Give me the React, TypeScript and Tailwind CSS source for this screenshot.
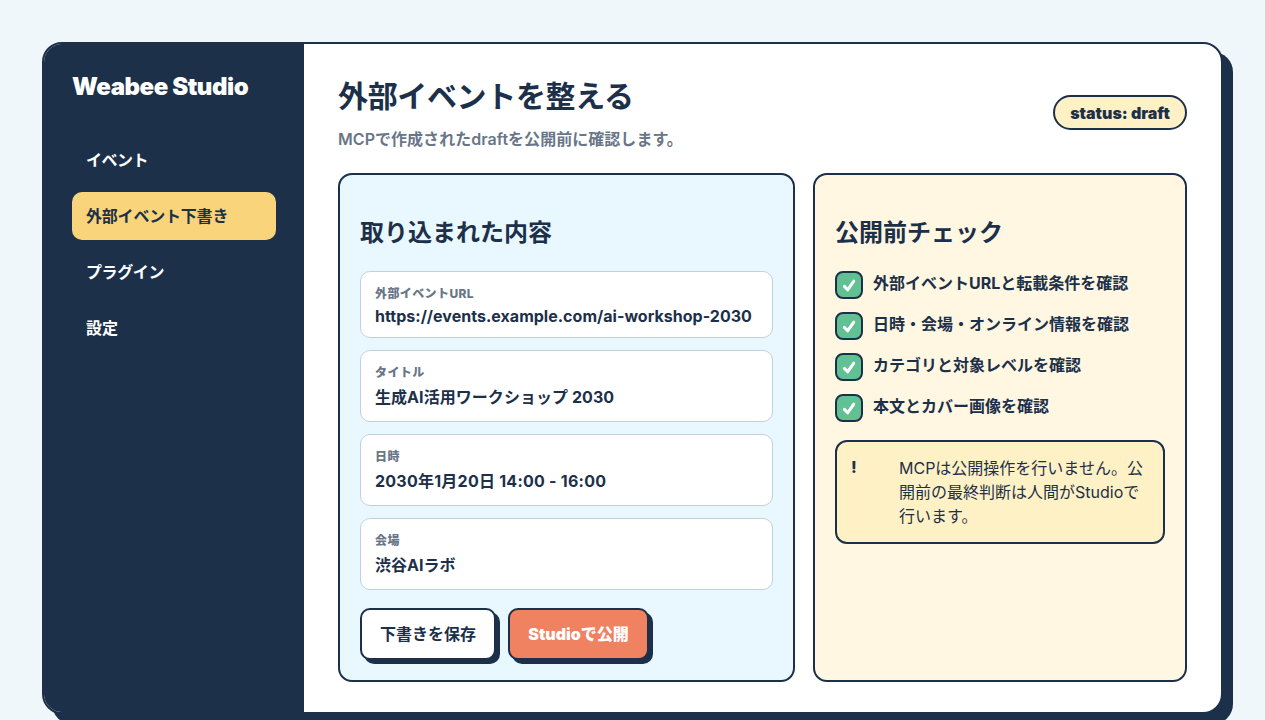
import clsx from 'clsx';

const navItems = [
  { label: 'イベント', active: false, text: 'tracking-[-0.5px]' },
  { label: '外部イベント下書き', active: true, text: 'tracking-[-0.2px]' },
  { label: 'プラグイン', active: false, text: 'tracking-[-0.4px]' },
  { label: '設定', active: false, text: '' },
];

const fields = [
  { label: '外部イベントURL', value: 'https://events.example.com/ai-workshop-2030', box: 'h-[67px]', text: 'tracking-[0.02px]' },
  { label: 'タイトル', value: '生成AI活用ワークショップ 2030', box: 'h-[72px]', text: 'mt-0.5 tracking-[0.05px]' },
  { label: '日時', value: '2030年1月20日 14:00 - 16:00', box: 'h-[72px]', text: 'mt-0.5 tracking-[0.24px]' },
  { label: '会場', value: '渋谷AIラボ', box: 'h-[72px]', text: 'mt-0.5' },
];

const checks = [
  '外部イベントURLと転載条件を確認',
  '日時・会場・オンライン情報を確認',
  'カテゴリと対象レベルを確認',
  '本文とカバー画像を確認',
];

const CheckMark = () => (
  <span className="flex size-7 shrink-0 items-center justify-center rounded-lg border-2 border-[#1c3049] bg-[#62c192]">
    <svg className="size-4" viewBox="0 0 16 16" fill="none" stroke="white" strokeWidth={3} strokeLinecap="round" strokeLinejoin="round">
      <path d="M3.4 9.4 L6.6 12.8 L12.8 4.2" />
    </svg>
  </span>
);

const Sidebar = () => (
  <aside className="w-[260px] shrink-0 bg-[#1c3049] p-7 text-white">
    <div className="h-16 text-2xl leading-[29px] font-black tracking-[-0.45px]">Weabee Studio</div>
    <nav className="flex flex-col gap-2">
      {navItems.map((item) => (
        <a
          key={item.label}
          className={clsx(
            'flex h-12 items-center rounded-[10px] px-3.5 text-base font-bold',
            item.text,
            item.active && 'bg-[#f9d47a] text-[#1c3049]'
          )}
        >
          {item.label}
        </a>
      ))}
    </nav>
  </aside>
);

const App = () => {
  return (
    <div className="h-[720px] overflow-hidden bg-[#eff7fb] p-[42px] font-['Inter','Noto_Sans_CJK_JP',sans-serif] text-[#1c3049]">
      <div className="flex h-[672px] overflow-hidden rounded-[20px] border-2 border-[#1c3049] bg-white shadow-[10px_10px_0_#1c3049]">
        <Sidebar />

        <main className="flex min-w-0 grow flex-col px-[34px] pt-[34px] pb-[30px]">
          <header className="flex h-[95px] items-start justify-between">
            <div>
              <h1 className="text-[30px] leading-9 font-bold tracking-[-0.35px]">外部イベントを整える</h1>
              <p className="mt-[13px] text-base leading-6 font-semibold tracking-[0.04px] text-[#697688]">
                MCPで作成されたdraftを公開前に確認します。
              </p>
            </div>
            <span className="mt-[17px] flex h-[35px] w-[134px] items-center justify-center rounded-full border-2 border-[#1c3049] bg-[#fff1c6] text-base font-black">
              status: draft
            </span>
          </header>

          <div className="flex grow gap-[18px]">
            {/* Imported content */}
            <section className="w-[457px] shrink-0 rounded-[14px] border-2 border-[#1c3049] bg-[#e9f7ff] px-5 pt-10">
              <h2 className="mb-5 text-2xl leading-9 font-bold">取り込まれた内容</h2>
              <div className="flex flex-col gap-3">
                {fields.map((field) => (
                  <div key={field.label} className={clsx('rounded-[10px] border border-[#c3cfdf] bg-white px-3.5 pt-[13px]', field.box)}>
                    <div className="text-xs leading-[18px] font-extrabold tracking-[0.4px] text-[#697688]">{field.label}</div>
                    <div className={clsx('text-base leading-[26px] font-bold', field.text)}>{field.value}</div>
                  </div>
                ))}
              </div>
              <div className="mt-[18px] flex gap-3">
                <button className="h-[52px] w-[136px] rounded-[10px] border-2 border-[#1c3049] bg-white text-base font-bold shadow-[4px_4px_0_#1c3049]">
                  下書きを保存
                </button>
                <button className="h-[52px] w-[141px] rounded-[10px] border-2 border-[#1c3049] bg-[#f08262] text-base font-black text-white shadow-[4px_4px_0_#1c3049]">
                  Studioで公開
                </button>
              </div>
            </section>

            {/* Pre-publish checklist */}
            <section className="grow rounded-[14px] border-2 border-[#1c3049] bg-[#fff7e1] px-5 pt-10">
              <h2 className="mb-5 text-2xl leading-9 font-bold">公開前チェック</h2>
              <ul className="flex flex-col gap-[13px]">
                {checks.map((check) => (
                  <li key={check} className="flex h-7 items-start gap-2.5 text-base leading-6 font-bold">
                    <CheckMark />
                    {check}
                  </li>
                ))}
              </ul>
              <div className="mt-[18px] flex h-[104px] rounded-xl border-2 border-[#1c3049] bg-[#fff1c6] p-3.5 text-base leading-6">
                <strong className="w-12 shrink-0 leading-[22px] font-extrabold">!</strong>
                <span>MCPは公開操作を行いません。公開前の最終判断は人間がStudioで行います。</span>
              </div>
            </section>
          </div>
        </main>
      </div>
    </div>
  );
};

export default App;
